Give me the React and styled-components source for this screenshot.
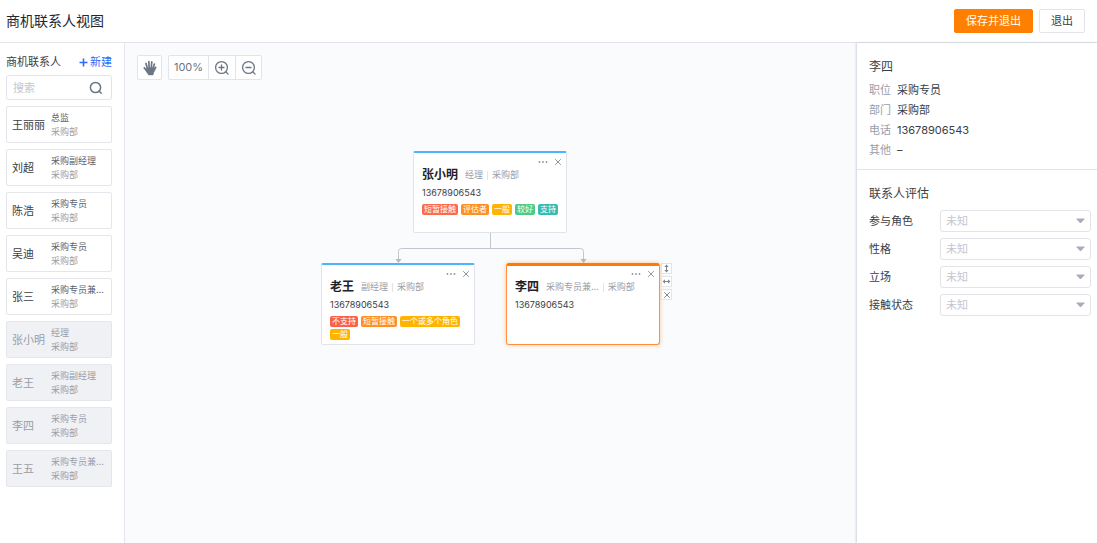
import React from 'react';
import styled, { createGlobalStyle, css } from 'styled-components';

const GlobalStyle = createGlobalStyle`
    * {
        box-sizing: border-box;
    }
    body {
        margin: 0;
        background: #fff;
        color: #3a3e46;
        font-family: Inter, 'Noto Sans CJK SC', sans-serif;
        font-size: 11px;
        line-height: 16px;
    }
    button, input, select {
        font: inherit;
        color: inherit;
        margin: 0;
    }
    h1, h2, p, dl, dd, ul {
        margin: 0;
        padding: 0;
        font-weight: 400;
    }
`;

const Page = styled.div`
    display: flex;
    flex-direction: column;
    min-height: 100vh;
`;

const Header = styled.header`
    display: flex;
    align-items: center;
    justify-content: space-between;
    padding: 9px 12px 9px 6px;
    border-bottom: 1px solid #e2e4e9;
`;

const PageTitle = styled.h1`
    font-size: 14px;
    line-height: 20px;
    color: #24272d;
`;

const HeaderActions = styled.div`
    display: flex;
    gap: 6px;
`;

const Button = styled.button`
    height: 24px;
    padding: 0 11px;
    border-radius: 2px;
    cursor: pointer;
    border: 1px solid ${props => props.$primary ? '#ff8000' : '#e2e4ea'};
    background: ${props => props.$primary ? '#ff8000' : '#fff'};
    color: ${props => props.$primary ? '#fff' : '#3a3e46'};
`;

const Body = styled.div`
    display: flex;
    flex: 1;
`;

const Sidebar = styled.aside`
    flex: none;
    width: 125px;
    padding: 11px 12px 12px 6px;
    border-right: 1px solid #e4e6ec;
`;

const SidebarHead = styled.div`
    display: flex;
    align-items: center;
    justify-content: space-between;
    margin-bottom: 5px;
`;

const AddButton = styled.button`
    display: flex;
    align-items: center;
    gap: 2px;
    padding: 0;
    border: 0;
    background: none;
    color: #2b6bff;
    cursor: pointer;
`;

const Search = styled.label`
    display: flex;
    align-items: center;
    height: 25px;
    padding: 0 8px 0 6px;
    margin-bottom: 6px;
    border: 1px solid #e2e4ea;
    border-radius: 3px;
    color: #6b7586;
`;

const SearchInput = styled.input`
    flex: 1;
    min-width: 0;
    padding: 0;
    border: 0;
    outline: 0;
    background: none;
    &::placeholder {
        color: #c3c6d0;
        opacity: 1;
    }
`;

const ContactList = styled.ul`
    display: grid;
    gap: 6px;
    list-style: none;
`;

const Contact = styled.li`
    display: grid;
    grid-template-columns: 33px 1fr;
    column-gap: 6px;
    align-items: center;
    height: 37px;
    padding: 0 5px;
    border: 1px solid #e4e6ec;
    border-radius: 2px;
    white-space: nowrap;
    ${props => props.$used && css`
        background: #f0f1f5;
        color: #9a9da8;
    `}
`;

const ContactInfo = styled.div`
    font-size: 9px;
    line-height: 14px;
    color: ${props => props.$used ? '#9a9da8' : '#5c606a'};
`;

const Muted = styled.p`
    color: #9a9da8;
`;

const Canvas = styled.main`
    position: relative;
    flex: 1;
    min-width: 0;
    padding: 12px;
    overflow: hidden;
    background: #fafbfd;
`;

const Toolbar = styled.div`
    display: flex;
    gap: 6px;
    color: #6b7586;
`;

const ToolGroup = styled.div`
    display: flex;
    height: 25px;
    border: 1px solid #e2e4ea;
    border-radius: 2px;
    background: #fff;
`;

const Tool = styled.button`
    display: flex;
    align-items: center;
    justify-content: center;
    width: ${props => props.$width || 26}px;
    padding: 0;
    border: 0;
    background: none;
    cursor: pointer;
    & + &, span + & {
        border-left: 1px solid #e2e4ea;
    }
`;

const Zoom = styled.span`
    width: 39px;
    line-height: 23px;
    text-align: center;
`;

const Lines = styled.svg`
    position: absolute;
    left: 196px;
    top: 190px;
`;

const Node = styled.article`
    position: absolute;
    left: ${props => props.$x}px;
    top: ${props => props.$y}px;
    width: 154px;
    height: 82px;
    padding: 5px 8px 0;
    border: 1px solid #e2e4ea;
    border-top: 2px solid #4fb5fb;
    border-radius: 2px;
    background: #fff;
    ${props => props.$active && css`
        border-color: #ff9040;
        border-top: 3px solid #ff7a00;
        padding-top: 4px;
        border-radius: 3px;
        box-shadow: 0 0 4px rgba(255, 128, 0, 0.45);
    `}
`;

const NodeActions = styled.div`
    display: flex;
    justify-content: flex-end;
    gap: 6px;
    height: 8px;
    margin-right: -4px;
`;

const IconButton = styled.button`
    display: flex;
    align-items: center;
    padding: 0;
    border: 0;
    background: none;
    color: #8f95a3;
    cursor: pointer;
`;

const NodeHead = styled.div`
    display: flex;
    align-items: center;
    font-size: 9px;
    line-height: 18px;
    color: #9a9da8;
    white-space: nowrap;
`;

const NodeName = styled.h2`
    margin-right: 7px;
    font-size: 12px;
    font-weight: 600;
    color: #1f2228;
`;

const Dept = styled.span`
    display: flex;
    align-items: center;
    &::before {
        content: '';
        height: 9px;
        margin: 0 4px;
        border-left: 1px solid #e2e4ea;
    }
`;

const Phone = styled.p`
    font-size: 9px;
    line-height: 18px;
`;

const Tags = styled.div`
    display: flex;
    flex-wrap: wrap;
    gap: 2px 3px;
    margin-top: 2px;
`;

const Tag = styled.span`
    height: 11px;
    padding: 0 2px;
    border-radius: 2px;
    font-size: 8px;
    line-height: 11px;
    color: #fff;
    background: ${props => props.$color};
`;

const NodeTools = styled.div`
    position: absolute;
    left: 536px;
    top: 220px;
    display: grid;
    gap: 2px;
`;

const NodeTool = styled.button`
    display: flex;
    align-items: center;
    justify-content: center;
    width: 11px;
    height: 11px;
    padding: 0;
    border: 1px solid #e2e4ea;
    background: #fff;
    color: #7d8594;
    cursor: pointer;
`;

const Panel = styled.aside`
    position: relative;
    flex: none;
    width: 240px;
    background: #fff;
    box-shadow: -1px 0 2px rgba(40, 50, 70, 0.2);
`;

const Section = styled.section`
    padding: 15px 6px 9px 12px;
    & + & {
        border-top: 1px solid #e2e4e9;
    }
`;

const SectionTitle = styled.h2`
    font-size: 12px;
    line-height: 18px;
`;

const Details = styled.dl`
    display: grid;
    grid-template-columns: 22px 1fr;
    column-gap: 6px;
    margin-top: 4px;
    line-height: 20px;
`;

const Term = styled.dt`
    color: #9a9da8;
`;

const Form = styled.form`
    display: grid;
    gap: 6px;
    margin-top: 7px;
`;

const Field = styled.label`
    display: grid;
    grid-template-columns: 71px 1fr;
    align-items: center;
`;

const SelectBox = styled.span`
    position: relative;
    display: block;
    height: 22px;
    svg {
        position: absolute;
        right: 6px;
        top: 8px;
        pointer-events: none;
    }
`;

const Select = styled.select`
    display: block;
    width: 100%;
    height: 22px;
    padding: 0 5px;
    appearance: none;
    border: 1px solid #e2e4ea;
    border-radius: 3px;
    background: #fff;
    color: #c3c6d0;
`;

const contacts = [
    { name: '王丽丽', job: '总监' },
    { name: '刘超', job: '采购副经理' },
    { name: '陈浩', job: '采购专员' },
    { name: '吴迪', job: '采购专员' },
    { name: '张三', job: '采购专员兼…' },
    { name: '张小明', job: '经理', used: true },
    { name: '老王', job: '采购副经理', used: true },
    { name: '李四', job: '采购专员', used: true },
    { name: '王五', job: '采购专员兼…', used: true }
];

const nodes = [
    {
        name: '张小明', job: '经理', x: 288, y: 108,
        tags: [['短暂接触', '#fb6a4a'], ['评估者', '#fd8f25'], ['一般', '#ffb400'], ['较好', '#4bcb83'], ['支持', '#35bdb2']]
    },
    {
        name: '老王', job: '副经理', x: 196, y: 220,
        tags: [['不支持', '#fb6148'], ['短暂接触', '#fd8f25'], ['一个或多个角色', '#ffb400'], ['一般', '#ffb400']]
    },
    { name: '李四', job: '采购专员兼…', x: 381, y: 220, active: true, tags: [] }
];

const details = [
    ['职位', '采购专员'],
    ['部门', '采购部'],
    ['电话', '13678906543'],
    ['其他', '–']
];

const fields = ['参与角色', '性格', '立场', '接触状态'];

const PlusIcon = () => (
    <svg width="9" height="9" viewBox="0 0 9 9" stroke="currentColor" strokeWidth="1.6">
        <path d="M4.5 .5v8M.5 4.5h8" />
    </svg>
);

const SearchIcon = () => (
    <svg width="14" height="14" viewBox="0 0 14 14" fill="none" stroke="currentColor" strokeWidth="1.5" strokeLinecap="round">
        <circle cx="6.5" cy="6.5" r="5.1" />
        <path d="M10.3 10.3L12.2 12.2" />
    </svg>
);

const ZoomIcon = ({ plus }) => (
    <svg width="16" height="16" viewBox="0 0 16 16" fill="none" stroke="currentColor" strokeWidth="1.3" strokeLinecap="round">
        <circle cx="7.5" cy="7.5" r="5.9" />
        <path d="M11.8 11.8L14.1 14.1M5 7.5h5" />
        {plus && <path d="M7.5 5v5" />}
    </svg>
);

const HandIcon = () => (
    <svg width="14" height="16" viewBox="0 0 14 16" fill="none" stroke="currentColor" strokeLinecap="round" strokeLinejoin="round">
        <path d="M4.4 8.5L3 3.4M6.2 8L5.8 1.6M8.2 8L8.8 1.9M9.8 8.8L11.4 4" strokeWidth="1.7" />
        <path d="M4.2 11.5L1.3 7.9" strokeWidth="1.7" />
        <path d="M3.9 8h6.6l2-1.2c.8 0 .9.6.5 1.2l-2.2 4.3-.8 2.6H5.6L3.4 11.4z" fill="currentColor" strokeWidth=".6" />
    </svg>
);

const CloseIcon = () => (
    <svg width="8" height="8" viewBox="0 0 8 8" stroke="currentColor">
        <path d="M1.2 1.2l5.6 5.6M6.8 1.2L1.2 6.8" />
    </svg>
);

const DotsIcon = () => (
    <svg width="10" height="8" viewBox="0 0 10 8" fill="currentColor">
        <circle cx="1.5" cy="4" r=".9" />
        <circle cx="5" cy="4" r=".9" />
        <circle cx="8.5" cy="4" r=".9" />
    </svg>
);

const ArrowsIcon = ({ horizontal }) => (
    <svg width="9" height="9" viewBox="0 0 9 9" fill="currentColor">
        <g transform={horizontal ? 'rotate(90 4.5 4.5)' : undefined}>
            <path d="M4.5 .6L6.7 3H5v3h1.7L4.5 8.4 2.3 6H4V3H2.3z" />
        </g>
    </svg>
);

const CaretIcon = () => (
    <svg width="9" height="6" viewBox="0 0 9 6" fill="#a9adba">
        <path d="M1 .5h7q.8 0 .4.7L5.2 4.7q-.7.7-1.4 0L.6 1.2Q.2.5 1 .5z" />
    </svg>
);

const Card = ({ node }) => (
    <Node $x={node.x} $y={node.y} $active={node.active}>
        <NodeActions>
            <IconButton type="button" aria-label="更多"><DotsIcon /></IconButton>
            <IconButton type="button" aria-label="移除"><CloseIcon /></IconButton>
        </NodeActions>
        <NodeHead>
            <NodeName>{node.name}</NodeName>
            <span>{node.job}</span>
            <Dept>采购部</Dept>
        </NodeHead>
        <Phone>13678906543</Phone>
        <Tags>
            {node.tags.map(([text, color]) => <Tag key={text} $color={color}>{text}</Tag>)}
        </Tags>
    </Node>
);

export default function App () {
    return (
        <Page>
            <GlobalStyle />
            <Header>
                <PageTitle>商机联系人视图</PageTitle>
                <HeaderActions>
                    <Button type="button" $primary>保存并退出</Button>
                    <Button type="button">退出</Button>
                </HeaderActions>
            </Header>
            <Body>
                <Sidebar>
                    <SidebarHead>
                        <span>商机联系人</span>
                        <AddButton type="button"><PlusIcon />新建</AddButton>
                    </SidebarHead>
                    <Search>
                        <SearchInput type="text" placeholder="搜索" aria-label="搜索" />
                        <SearchIcon />
                    </Search>
                    <ContactList>
                        {contacts.map(({ name, job, used }) => (
                            <Contact key={name} $used={used}>
                                <span>{name}</span>
                                <ContactInfo $used={used}>
                                    <p>{job}</p>
                                    <Muted>采购部</Muted>
                                </ContactInfo>
                            </Contact>
                        ))}
                    </ContactList>
                </Sidebar>
                <Canvas>
                    <Toolbar>
                        <ToolGroup>
                            <Tool type="button" $width={23} aria-label="拖动"><HandIcon /></Tool>
                        </ToolGroup>
                        <ToolGroup>
                            <Zoom>100%</Zoom>
                            <Tool type="button" $width={27} aria-label="放大"><ZoomIcon plus /></Tool>
                            <Tool type="button" aria-label="缩小"><ZoomIcon /></Tool>
                        </ToolGroup>
                    </Toolbar>
                    <Lines width="340" height="30" viewBox="0 0 340 30" fill="none" stroke="#c3c6d0">
                        <path d="M169.5 0V15.5M77.5 27V18.5q0-3 3-3H259.500q3 0 3 3V27" />
                        <path d="M74.500 26h6l-3 4zM259.500 26h6l-3 4z" fill="#b4b8c4" stroke="none" />
                    </Lines>
                    {nodes.map(node => <Card key={node.name} node={node} />)}
                    <NodeTools>
                        <NodeTool type="button" aria-label="纵向"><ArrowsIcon /></NodeTool>
                        <NodeTool type="button" aria-label="横向"><ArrowsIcon horizontal /></NodeTool>
                        <NodeTool type="button" aria-label="删除"><CloseIcon /></NodeTool>
                    </NodeTools>
                </Canvas>
                <Panel>
                    <Section>
                        <SectionTitle>李四</SectionTitle>
                        <Details>
                            {details.map(([term, value]) => (
                                <React.Fragment key={term}>
                                    <Term>{term}</Term>
                                    <dd>{value}</dd>
                                </React.Fragment>
                            ))}
                        </Details>
                    </Section>
                    <Section>
                        <SectionTitle>联系人评估</SectionTitle>
                        <Form>
                            {fields.map(field => (
                                <Field key={field}>
                                    {field}
                                    <SelectBox>
                                        <Select>
                                            <option>未知</option>
                                        </Select>
                                        <CaretIcon />
                                    </SelectBox>
                                </Field>
                            ))}
                        </Form>
                    </Section>
                </Panel>
            </Body>
        </Page>
    );
}
